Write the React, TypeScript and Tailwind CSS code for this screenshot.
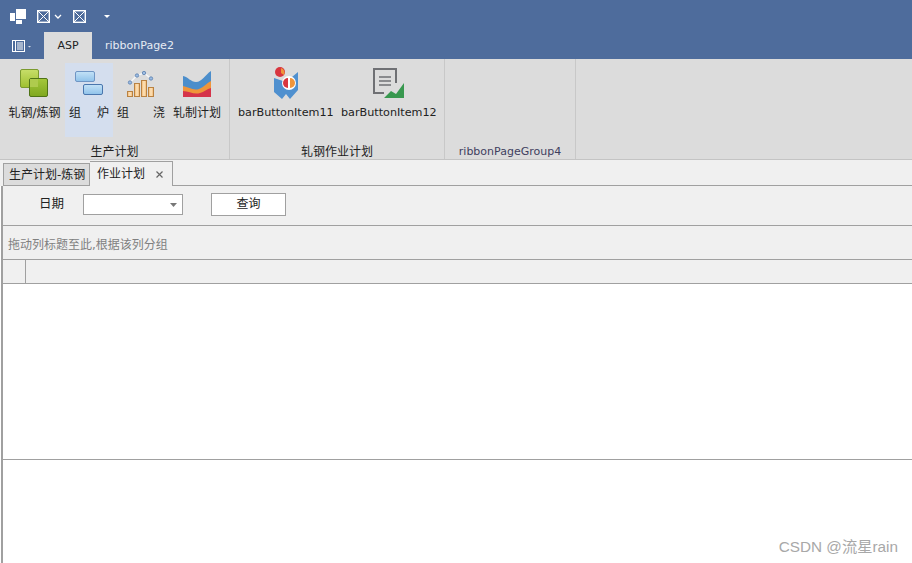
const font = "[font-family:'DejaVu_Sans','Noto_Sans_CJK_SC',sans-serif]";

const XBoxIcon = () => (
  <svg width="13" height="13" viewBox="0 0 13 13" fill="none" stroke="#ffffff" className="block">
    <rect x="0.7" y="0.7" width="11.6" height="11.6" strokeWidth="1.4" />
    <path d="M1 1 12 12M12 1 1 12" strokeWidth="1" />
  </svg>
);

const GreenIcon = () => (
  <svg width="29" height="29" viewBox="0 0 29 29">
    <defs>
      <linearGradient id="g1" x1="0" y1="0" x2="0" y2="1">
        <stop offset="0" stopColor="#c8de6a" />
        <stop offset="1" stopColor="#9ec02f" />
      </linearGradient>
      <linearGradient id="g2" x1="0" y1="0" x2="0" y2="1">
        <stop offset="0" stopColor="#a5c83c" />
        <stop offset="1" stopColor="#7fa81f" />
      </linearGradient>
    </defs>
    <rect x="0.5" y="0.5" width="18" height="18" rx="1.5" fill="url(#g1)" stroke="#7b9a2e" />
    <rect x="9.5" y="9.5" width="18" height="18" rx="1.5" fill="url(#g2)" stroke="#4f7316" />
    <rect x="10" y="10" width="8" height="8" fill="#afcb4e" />
  </svg>
);

const BlueIcon = () => (
  <svg width="29" height="25" viewBox="0 0 29 25">
    <defs>
      <linearGradient id="b1" x1="0" y1="0" x2="0" y2="1">
        <stop offset="0" stopColor="#c4e2f7" />
        <stop offset="1" stopColor="#8fc2ea" />
      </linearGradient>
    </defs>
    <rect x="0.5" y="0.5" width="19" height="10" rx="1.5" fill="url(#b1)" stroke="#6f95c4" />
    <rect x="8.5" y="13.5" width="19" height="10" rx="1.5" fill="url(#b1)" stroke="#4a76ad" />
  </svg>
);

const BarsIcon = () => (
  <svg width="28" height="26" viewBox="0 0 28 26">
    <defs>
      <linearGradient id="o1" x1="0" y1="0" x2="1" y2="0">
        <stop offset="0" stopColor="#f2b56c" />
        <stop offset="0.5" stopColor="#fde4bd" />
        <stop offset="1" stopColor="#f2b56c" />
      </linearGradient>
    </defs>
    <path d="M3 11.5 10 4.5 17 2 24 7.5" fill="none" stroke="#f4f6f8" strokeWidth="1.5" />
    <rect x="0.5" y="20.5" width="5" height="5" fill="url(#o1)" stroke="#b98242" />
    <rect x="7.5" y="12.5" width="5" height="13" fill="url(#o1)" stroke="#b98242" />
    <rect x="14.5" y="9.5" width="5" height="16" fill="url(#o1)" stroke="#b98242" />
    <rect x="21.5" y="16.5" width="5" height="9" fill="url(#o1)" stroke="#b98242" />
    <circle cx="3" cy="11.5" r="1.7" fill="#9dbde2" stroke="#4e74a8" strokeWidth="0.7" />
    <circle cx="10" cy="4.5" r="1.7" fill="#9dbde2" stroke="#4e74a8" strokeWidth="0.7" />
    <circle cx="17" cy="2" r="1.7" fill="#9dbde2" stroke="#4e74a8" strokeWidth="0.7" />
    <circle cx="24" cy="7.5" r="1.7" fill="#9dbde2" stroke="#4e74a8" strokeWidth="0.7" />
  </svg>
);

const AreaIcon = () => (
  <svg width="28" height="26" viewBox="0 0 28 26">
    <path d="M0 5C5 6 8 11 13 11 19 11 22 4 28 0V26H0Z" fill="#4c8ecb" />
    <path d="M0 15C6 16 10 20 16 18 21 16 24 12 28 10V26H0Z" fill="#f0953a" />
    <path d="M0 20C6 20 11 24 17 22 21 21 24 18 28 17V26H0Z" fill="#d5344a" />
  </svg>
);

const BookIcon = () => (
  <svg width="26" height="33" viewBox="0 0 26 33">
    <path d="M1 11 13 15 25 5V23L17 32 13 27 9 32 1 25Z" fill="#4f90cf" />
    <circle cx="7" cy="5" r="5" fill="#d8363f" />
    <path d="M8 1A5 5 0 0 1 11 8L8 6Z" fill="#f0953a" />
    <circle cx="16" cy="16" r="7" fill="#ffffff" />
    <path d="M15 11A5 5 0 0 0 15 21Z" fill="#d8363f" />
    <path d="M17 11A5 5 0 0 1 17 21Z" fill="#f0953a" />
  </svg>
);

const ReportIcon = () => (
  <svg width="31" height="31" viewBox="0 0 31 31">
    <path d="M23 15V1H1V25H11" fill="none" stroke="#6f7074" strokeWidth="2" />
    <path d="M6 9H18M6 13H18M6 17H18" stroke="#6f7074" strokeWidth="1.6" />
    <path d="M11 30 18 23 23 26 31 15V30Z" fill="#38984f" />
  </svg>
);

const Group = ({ width, title, titleClass, children }: { width: string; title: string; titleClass?: string; children?: React.ReactNode }) => (
  <div className={`${width} flex flex-col border-r border-[#c8c8c8]`}>
    <div className="flex flex-1 items-start">{children}</div>
    <div className={`h-[18px] text-center leading-[22px] ${titleClass ?? "text-[12px] text-[#222222]"}`}>{title}</div>
  </div>
);

const RibbonButton = ({ width, icon, label, labelClass, active }: { width: string; icon: React.ReactNode; label: React.ReactNode; labelClass?: string; active?: boolean }) => (
  <div className={`${width} mt-[4px] flex h-[74px] shrink-0 flex-col items-center ${active ? "bg-[#d4deee]" : ""}`}>
    <div className="flex h-[41px] items-center justify-center">{icon}</div>
    <div className={`mt-[1px] w-full whitespace-nowrap text-center leading-[16px] text-[#222222] ${labelClass ?? "text-[12px]"}`}>{label}</div>
  </div>
);

export default function App() {
  return (
    <div className={`${font} h-[563px] w-[912px] overflow-hidden bg-white`}>
      <div className="flex h-[32px] items-center bg-[#4e6c9c] pl-[10px]">
        <svg width="16" height="15" viewBox="0 0 16 15" fill="#ffffff" className="block">
          <rect x="0" y="4" width="5" height="8" />
          <rect x="6" y="0" width="10" height="10" />
          <rect x="6" y="11" width="6" height="4" />
        </svg>
        <div className="ml-[11px]"><XBoxIcon /></div>
        <svg width="8" height="5" viewBox="0 0 8 5" fill="none" stroke="#ffffff" strokeWidth="1.3" className="ml-[4px] block">
          <path d="M1 1 4 4 7 1" />
        </svg>
        <div className="ml-[11px]"><XBoxIcon /></div>
        <svg width="6" height="3" viewBox="0 0 6 3" fill="#ffffff" className="ml-[18px] block">
          <path d="M0 0H6L3 3Z" />
        </svg>
      </div>

      <div className="flex h-[27px] bg-[#4e6c9c] text-[11px] leading-[27px]">
        <div className="flex w-[44px] items-center pl-[12px]">
          <svg width="20" height="12" viewBox="0 0 20 12" className="block">
            <rect x="0.5" y="0.5" width="3" height="11" fill="none" stroke="#ffffff" />
            <rect x="3.5" y="0.5" width="9" height="11" fill="#4e6c9c" stroke="#ffffff" />
            <path d="M5 3H11M5 5H11M5 7H11M5 9H11" stroke="#ffffff" />
            <path d="M16 6H19L17.5 7.5Z" fill="#d5dce8" />
          </svg>
        </div>
        <div className="w-[48px] bg-[#dcdcdc] text-center text-[#222222]">ASP</div>
        <div className="ml-[13px] text-[#e6ebf3]">ribbonPage2</div>
      </div>

      <div className="flex h-[101px] border-b border-[#c4c4c4] bg-[#dcdcdc]">
        <Group width="w-[230px]" title="生产计划">
          <RibbonButton width="w-[53px] ml-[8px]" icon={<GreenIcon />} label="轧钢/炼钢" />
          <RibbonButton
            width="w-[48px] ml-[4px]"
            active
            icon={<BlueIcon />}
            label={<div className="flex justify-between px-[4px]"><span>组</span><span>炉</span></div>}
          />
          <RibbonButton
            width="w-[48px] ml-[4px]"
            icon={<BarsIcon />}
            label={<div className="flex justify-between"><span>组</span><span>浇</span></div>}
          />
          <RibbonButton width="w-[48px] ml-[8px]" icon={<AreaIcon />} label="轧制计划" />
        </Group>
        <Group width="w-[215px]" title="轧钢作业计划">
          <RibbonButton width="w-[95px] ml-[8px]" icon={<BookIcon />} label="barButtonItem11" labelClass="text-[11.2px]" />
          <RibbonButton width="w-[95px] ml-[8px]" icon={<ReportIcon />} label="barButtonItem12" labelClass="text-[11.2px]" />
        </Group>
        <Group width="w-[131px]" title="ribbonPageGroup4" titleClass="text-[11px] text-[#3f3f5f]" />
      </div>

      <div className="h-[26px] bg-[#f0f0f0] pl-[3px]">
        <div className="flex h-[26px] items-end border-b border-[#a0a0a0] pt-[1px]">
          <div className="-mb-px mt-auto h-[23px] w-[87px] whitespace-nowrap border border-[#a0a0a0] bg-[#dcdcdc] pl-[5px] text-[12px] leading-[22px] text-[#222222]">
            生产计划-炼钢
          </div>
          <div className="-mb-px flex h-[25px] w-[83px] items-center border border-b-0 border-l-0 border-[#a0a0a0] bg-[#f0f0f0] pl-[7px] text-[12px] text-[#222222]">
            作业计划
            <svg width="7" height="7" viewBox="0 0 7 7" stroke="#666666" strokeWidth="1.2" className="ml-[11px] block">
              <path d="M.5.5 6.5 6.5M6.5.5.5 6.5" />
            </svg>
          </div>
        </div>
      </div>

      <div className="ml-[1px] h-[377px] border-l-2 border-[#a0a0a0] bg-white">
        <div className="flex h-[39px] items-center bg-[#f0f0f0] pb-[2px]">
          <span className="ml-[36px] text-[12.5px] text-[#222222]">日期</span>
          <div className="ml-[19px] flex h-[21px] w-[100px] items-center justify-end border border-[#a0a0a0] bg-white pr-[5px]">
            <svg width="7" height="4" viewBox="0 0 7 4" fill="#777777" className="block"><path d="M0 0H7L3.5 4Z" /></svg>
          </div>
          <div className="ml-[28px] h-[23px] w-[75px] border border-[#a0a0a0] bg-white text-center text-[12px] leading-[21px] text-[#222222]">查询</div>
        </div>

        <div className="h-[34px] border-t border-[#a0a0a0] bg-[#f0f0f0] pl-[5px] text-[12px] leading-[39px] text-[#808080]">
          拖动列标题至此,根据该列分组
        </div>

        <div className="flex h-[25px] border-y border-[#a0a0a0] bg-[#f0f0f0]">
          <div className="w-[23px] border-r border-[#a0a0a0]" />
        </div>

        <div className="h-[176px] border-b border-[#a0a0a0] bg-white" />

        <div className="flex h-[103px] items-end justify-end bg-white pr-[14px] pb-[6px]">
          <span className="text-[15.3px] leading-[20px] text-[#a8a8a8] [font-family:'Liberation_Sans','Noto_Sans_CJK_SC',sans-serif]">CSDN @流星rain</span>
        </div>
      </div>
    </div>
  );
}
